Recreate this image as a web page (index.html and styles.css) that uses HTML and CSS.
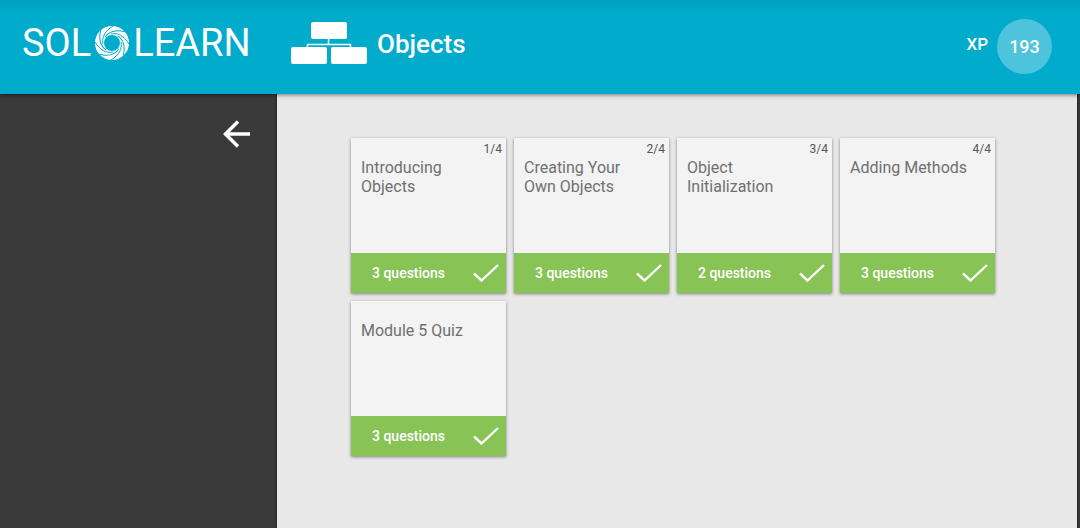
FILE: index.html
```html
<!DOCTYPE html>
<html lang="en">
<head>
<meta charset="utf-8">
<title>Objects</title>
<link rel="stylesheet" href="styles.css">
</head>
<body>
<svg class="defs" aria-hidden="true">
  <symbol id="check" viewBox="0 0 26 18"><path d="M1 9.5 8.5 16.5 25 1" fill="none" stroke="currentColor" stroke-width="2.4"/></symbol>
</svg>
<header class="topbar">
  <a class="logo" href="#" aria-label="SoloLearn">
    <span>SOL</span>
    <svg class="swirl" viewBox="-18 -18 36 36" aria-hidden="true">
      <defs><path id="gap" d="M-9 1C-10.500 -6 -7 -12 1 -17"/></defs>
      <circle r="12.500" fill="none" stroke="currentColor" stroke-width="9"/>
      <g fill="none" stroke="#00abcc" stroke-width="1">
        <use href="#gap"/><use href="#gap" transform="rotate(45)"/><use href="#gap" transform="rotate(90)"/><use href="#gap" transform="rotate(135)"/>
        <use href="#gap" transform="rotate(180)"/><use href="#gap" transform="rotate(225)"/><use href="#gap" transform="rotate(270)"/><use href="#gap" transform="rotate(315)"/>
      </g>
    </svg>
    <span>LEARN</span>
  </a>
  <svg class="module-icon" viewBox="0 0 76 42" aria-hidden="true">
    <g fill="currentColor"><rect x="20" width="36" height="17" rx="2"/><rect y="25" width="36" height="17" rx="2"/><rect x="40" y="25" width="36" height="17" rx="2"/></g>
    <path d="M37.500 17V22M16.500 26V22.500H59.500V26" fill="none" stroke="currentColor" stroke-width="1.500"/>
  </svg>
  <h1 class="module-title">Objects</h1>
  <div class="xp"><span class="xp-label">XP</span><span class="xp-value">193</span></div>
</header>
<div class="layout">
  <nav class="sidebar">
    <button class="back" aria-label="Back"><svg viewBox="0 0 28 28" aria-hidden="true"><path d="M15 1.500 2.500 14 15 26.500M2.500 14H27" fill="none" stroke="currentColor" stroke-width="3.500"/></svg></button>
  </nav>
  <main class="lessons">
    <a class="card" href="#"><span class="count">1/4</span><h2>Introducing Objects</h2><div class="status"><span>3 questions</span><svg><use href="#check"/></svg></div></a>
    <a class="card" href="#"><span class="count">2/4</span><h2>Creating Your Own Objects</h2><div class="status"><span>3 questions</span><svg><use href="#check"/></svg></div></a>
    <a class="card" href="#"><span class="count">3/4</span><h2>Object Initialization</h2><div class="status"><span>2 questions</span><svg><use href="#check"/></svg></div></a>
    <a class="card" href="#"><span class="count">4/4</span><h2>Adding Methods</h2><div class="status"><span>3 questions</span><svg><use href="#check"/></svg></div></a>
    <a class="card" href="#"><span class="count"></span><h2>Module 5 Quiz</h2><div class="status"><span>3 questions</span><svg><use href="#check"/></svg></div></a>
  </main>
</div>
</body>
</html>
```
FILE: styles.css
```css
* { box-sizing: border-box; }
body {
  margin: 0;
  min-height: 100vh;
  display: flex;
  flex-direction: column;
  font-family: Roboto, "Liberation Sans", sans-serif;
  background: #3a3a3a;
}
.defs { position: absolute; width: 0; height: 0; }
.topbar {
  position: relative;
  display: flex;
  align-items: center;
  min-height: 94px;
  padding: 0 28px 8px 22px;
  color: #fff;
  background: linear-gradient(#00a0bf, #00abcc 12px);
  box-shadow: 0 1px 4px rgba(0, 0, 0, .5);
}
.logo {
  display: flex;
  align-items: center;
  gap: 3px;
  width: 229px;
  color: inherit;
  text-decoration: none;
  font-size: 38px;
  line-height: 48px;
  font-weight: 400;
}
.swirl { width: 36px; height: 36px; flex: none; }
.module-icon { width: 76px; height: 42px; margin-left: 40px; }
.module-title { margin: 2px 0 0 10px; font-size: 26px; line-height: 32px; font-weight: 500; }
.xp { display: flex; align-items: center; gap: 9px; margin: 6px 0 0 auto; font-weight: 500; }
.xp-label { padding-bottom: 4px; font-size: 17px; }
.xp-value {
  display: grid;
  place-items: center;
  width: 55px;
  height: 55px;
  border-radius: 50%;
  font-size: 18px;
  background: #4dc4db;
}
.layout { flex: 1; display: flex; padding-right: 3px; }
.sidebar { width: 277px; flex: none; padding: 26px 26px 0; text-align: right; }
.back { padding: 0; border: 0; background: none; color: #fff; }
.back svg { display: block; width: 28px; height: 28px; }
.lessons {
  flex: 1;
  display: grid;
  grid-template-columns: repeat(auto-fill, 155px);
  align-content: start;
  gap: 8px;
  padding: 44px 60px 44px 74px;
  background: #e8e8e8;
  box-shadow: 0 0 3px rgba(0, 0, 0, .6);
}
.card {
  display: flex;
  flex-direction: column;
  min-height: 155px;
  color: #707070;
  text-decoration: none;
  background: #f3f3f3;
  box-shadow: 0 1px 3px rgba(0, 0, 0, .45);
}
.count { height: 20px; padding: 3px 4px 0 0; text-align: right; font-size: 12px; line-height: 16px; color: #555; }
.card h2 { margin: 0; padding: 0 20px 0 10px; font-size: 16px; line-height: 19px; font-weight: 400; }
.status {
  display: flex;
  align-items: center;
  justify-content: space-between;
  height: 40px;
  margin-top: auto;
  padding: 0 7px 0 21px;
  font-size: 14px;
  font-weight: 500;
  color: #fff;
  background: #87c355;
}
.status svg { width: 26px; height: 18px; }
```
